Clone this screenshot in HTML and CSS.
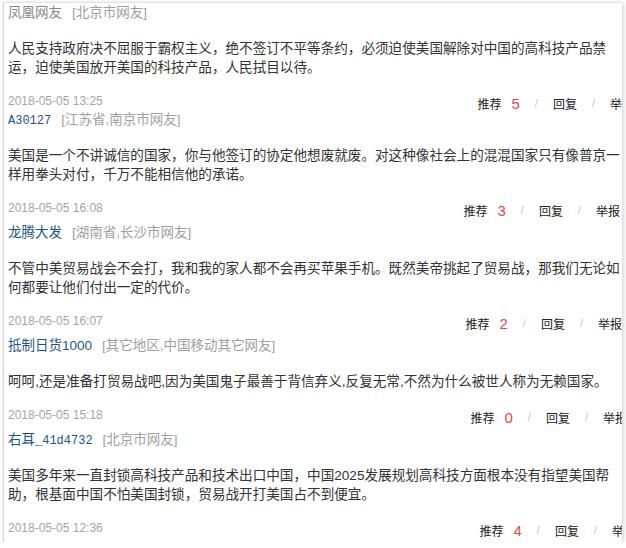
FILE: index.html
```html
<!DOCTYPE html>
<html>
<head>
<meta charset="utf-8">
<meta name="viewport" content="width=device-width, initial-scale=1">
<link rel="stylesheet" href="styles.css">
</head>
<body>

<!-- ************************ comment list ******************************** -->
<div class="card">

  <div class="comment">
    <div class="user"><span class="anon">凤凰网友</span><span class="loc">[北京市网友]</span></div>
    <p class="text">人民支持政府决不屈服于霸权主义，绝不签订不平等条约，必须迫使美国解除对中国的高科技产品禁运，迫使美国放开美国的科技产品，人民拭目以待。</p>
    <div class="meta">
      <span class="date">2018-05-05 13:25</span>
      <div class="acts off-a"><span>推荐<em>5</em></span><i>/</i><span>回复</span><i>/</i><span>举报</span></div>
    </div>
  </div>

  <div class="comment pull">
    <div class="user"><span class="name mono">A30127</span><span class="loc">[江苏省,南京市网友]</span></div>
    <p class="text">美国是一个不讲诚信的国家，你与他签订的协定他想废就废。对这种像社会上的混混国家只有像普京一样用拳头对付，千万不能相信他的承诺。</p>
    <div class="meta">
      <span class="date">2018-05-05 16:08</span>
      <div class="acts off-b"><span>推荐<em>3</em></span><i>/</i><span>回复</span><i>/</i><span>举报</span></div>
    </div>
  </div>

  <div class="comment">
    <div class="user"><span class="name">龙腾大发</span><span class="loc">[湖南省,长沙市网友]</span></div>
    <p class="text">不管中美贸易战会不会打，我和我的家人都不会再买苹果手机。既然美帝挑起了贸易战，那我们无论如何都要让他们付出一定的代价。</p>
    <div class="meta">
      <span class="date">2018-05-05 16:07</span>
      <div class="acts off-c"><span>推荐<em>2</em></span><i>/</i><span>回复</span><i>/</i><span>举报</span></div>
    </div>
  </div>

  <div class="comment">
    <div class="user"><span class="name">抵制日货1000</span><span class="loc">[其它地区,中国移动其它网友]</span></div>
    <p class="text">呵呵,还是准备打贸易战吧,因为美国鬼子最善于背信弃义,反复无常,不然为什么被世人称为无赖国家。</p>
    <div class="meta">
      <span class="date">2018-05-05 15:18</span>
      <div class="acts off-d"><span>推荐<em>0</em></span><i>/</i><span>回复</span><i>/</i><span>举报</span></div>
    </div>
  </div>

  <div class="comment">
    <div class="user"><span class="name">右耳<span class="mono">_41d4732</span></span><span class="loc">[北京市网友]</span></div>
    <p class="text">美国多年来一直封锁高科技产品和技术出口中国，中国2025发展规划高科技方面根本没有指望美国帮助，根基面中国不怕美国封锁，贸易战开打美国占不到便宜。</p>
    <div class="meta">
      <span class="date">2018-05-05 12:36</span>
      <div class="acts off-e"><span>推荐<em>4</em></span><i>/</i><span>回复</span><i>/</i><span>举报</span></div>
    </div>
  </div>

</div>

</body>
</html>
```

FILE: styles.css
```css
* {box-sizing: border-box}
body {
  margin: 0;
  background-color: #fff;
  font-family: "Liberation Sans", "Noto Sans CJK SC", sans-serif;
  color: #333;
}

/* the white sheet holding the comments */
.card {
  margin: 2px 0 0 3px;
  width: 619px;
  padding: 0 0 2px 4px;
  border-top: 1px solid #e4e4e4;
  border-left: 1px solid #d6d6d6;
  box-shadow: 1px 1px 4px rgba(0, 0, 0, 0.22);
  overflow: hidden;
  background-color: #fff;
}

.comment {
  margin-top: 3px;
}
.comment:first-child {
  margin-top: 0;
}
.comment.pull {
  margin-top: -3px;
}

/* user line */
.user {
  height: 20px;
  line-height: 20px;
  font-size: 13.5px;
  white-space: nowrap;
}
.anon {
  color: #8a8a8a;
}
.name {
  color: #1f5486;
}
.mono {
  font-family: "Liberation Mono", "Noto Sans CJK SC", monospace;
  font-size: 12px;
}
.loc {
  margin-left: 10px;
  color: #a0a0a0;
}

/* comment body */
.text {
  margin: 16px 0 0 0;
  font-size: 13.6px;
  line-height: 19px;
  color: #333;
}

/* date and actions */
.meta {
  display: flex;
  justify-content: space-between;
  align-items: center;
  margin-top: 16px;
  height: 20px;
}
.date {
  margin-bottom: 5px;
  font-size: 12px;
  color: #a5a5a5;
}
.acts {
  display: flex;
  align-items: center;
  flex-shrink: 0;
  font-size: 12px;
  color: #222;
  white-space: nowrap;
}
.acts em {
  margin-left: 10px;
  font-style: normal;
  font-size: 15px;
  font-weight: 300;
  color: #e3464b;
}
.acts i {
  margin: 0 15px;
  font-style: normal;
  font-size: 11px;
  color: #c4c4c4;
}

/* each row sits a little differently against the right edge */
.off-a {margin-right: -12px;}
.off-b {margin-right: 2px;}
.off-c {margin-right: 0;}
.off-d {margin-right: -5px;}
.off-e {margin-right: -14px;}
```
